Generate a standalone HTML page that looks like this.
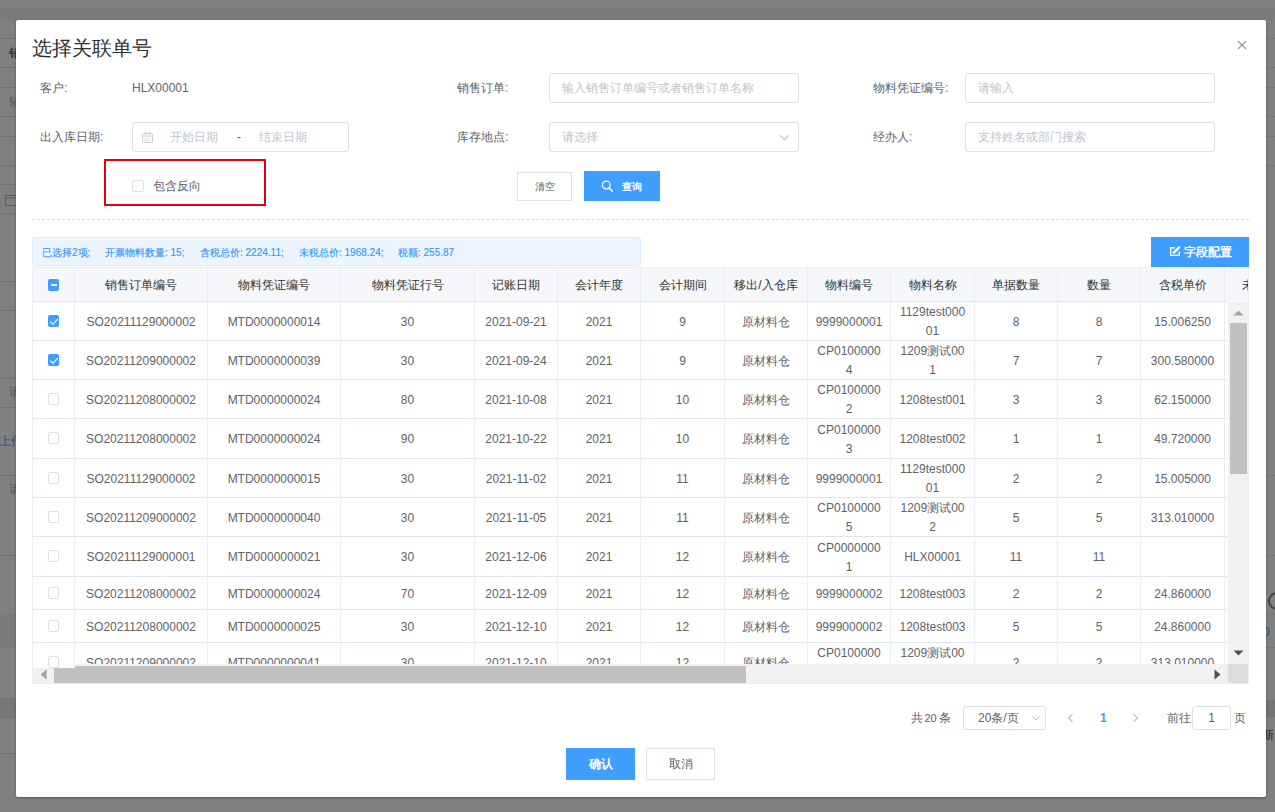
<!DOCTYPE html>
<html><head><meta charset="utf-8"><style>
html,body{margin:0;padding:0;width:1275px;height:812px;overflow:hidden;position:relative;font-family:"Liberation Sans", sans-serif;}
.t{position:absolute;white-space:nowrap;line-height:20px;height:20px}
</style></head><body>
<div style="position:absolute;left:0px;top:0px;width:1275px;height:812px;background:#808080"></div>
<div style="position:absolute;left:0px;top:9px;width:1275px;height:12px;background:#7a7b7b"></div>
<div style="position:absolute;left:0px;top:38px;width:16px;height:1px;background:#737476"></div>
<div style="position:absolute;left:0px;top:67px;width:16px;height:1px;background:#737476"></div>
<div style="position:absolute;left:0px;top:87px;width:16px;height:1px;background:#737476"></div>
<div style="position:absolute;left:0px;top:116px;width:16px;height:1px;background:#737476"></div>
<div style="position:absolute;left:0px;top:136px;width:16px;height:1px;background:#737476"></div>
<div style="position:absolute;left:0px;top:165px;width:16px;height:1px;background:#737476"></div>
<div style="position:absolute;left:0px;top:184px;width:16px;height:1px;background:#737476"></div>
<div style="position:absolute;left:0px;top:213px;width:16px;height:1px;background:#737476"></div>
<div style="position:absolute;left:0px;top:281px;width:16px;height:1px;background:#737476"></div>
<div style="position:absolute;left:0px;top:310px;width:16px;height:1px;background:#737476"></div>
<div style="position:absolute;left:0px;top:378px;width:16px;height:1px;background:#737476"></div>
<div style="position:absolute;left:0px;top:407px;width:16px;height:1px;background:#737476"></div>
<div style="position:absolute;left:0px;top:475px;width:16px;height:1px;background:#737476"></div>
<div style="position:absolute;left:0px;top:555px;width:16px;height:1px;background:#737476"></div>
<div style="position:absolute;left:0px;top:753px;width:16px;height:1px;background:#737476"></div>
<div style="position:absolute;left:1266px;top:38px;width:9px;height:1px;background:#737476"></div>
<div style="position:absolute;left:1266px;top:67px;width:9px;height:1px;background:#737476"></div>
<div style="position:absolute;left:1266px;top:87px;width:9px;height:1px;background:#737476"></div>
<div style="position:absolute;left:1266px;top:116px;width:9px;height:1px;background:#737476"></div>
<div style="position:absolute;left:1266px;top:136px;width:9px;height:1px;background:#737476"></div>
<div style="position:absolute;left:1266px;top:165px;width:9px;height:1px;background:#737476"></div>
<div style="position:absolute;left:1266px;top:475px;width:9px;height:1px;background:#737476"></div>
<div style="position:absolute;left:1266px;top:555px;width:9px;height:1px;background:#737476"></div>
<div style="position:absolute;left:1266px;top:614px;width:9px;height:1px;background:#737476"></div>
<div style="position:absolute;left:1266px;top:647px;width:9px;height:1px;background:#737476"></div>
<div style="position:absolute;left:0px;top:614px;width:16px;height:33px;background:#7a7b7c"></div>
<div style="position:absolute;left:0px;top:698px;width:16px;height:21px;background:#777777"></div>
<div style="position:absolute;left:1266px;top:700px;width:9px;height:17px;background:#747474"></div>
<div class="t" style="left:9px;top:43px;font-size:12px;color:#1a1a1a;font-weight:normal;">销</div>
<div class="t" style="left:9px;top:92px;font-size:12px;color:#555;font-weight:normal;">辅</div>
<svg style="position:absolute;left:5px;top:194px" width="12" height="12" viewBox="0 0 12 12"><rect x="0.5" y="1.5" width="11" height="10" fill="none" stroke="#5a5d66"/><line x1="0.5" y1="4" x2="11.5" y2="4" stroke="#5a5d66"/></svg>
<div class="t" style="left:9px;top:382px;font-size:12px;color:#555;font-weight:normal;">请</div>
<div class="t" style="left:-1px;top:431px;font-size:12px;color:#20508a;font-weight:normal;">上传</div>
<div class="t" style="left:9px;top:479px;font-size:12px;color:#555;font-weight:normal;">请</div>
<div style="position:absolute;left:1268px;top:592px;width:14px;height:14px;border:2px solid #444;border-radius:50%"></div>
<div class="t" style="left:1263px;top:622px;font-size:12px;color:#20508a;font-weight:normal;">0</div>
<div class="t" style="left:1262px;top:725px;font-size:12px;color:#222;font-weight:normal;">新</div>
<div style="position:absolute;left:16px;top:20px;width:1250px;height:777px;background:#fff;border-radius:2px;box-shadow:0 1px 3px rgba(0,0,0,.3)"></div>
<div class="t" style="left:32px;top:38px;font-size:20px;color:#303133;font-weight:300;">选择关联单号</div>
<svg style="position:absolute;left:1237px;top:40px" width="10" height="10" viewBox="0 0 10 10"><path d="M1 1L9 9M9 1L1 9" stroke="#909399" stroke-width="1.1"/></svg>
<div class="t" style="left:40px;top:78px;font-size:12px;color:#606266;font-weight:normal;">客户:</div>
<div class="t" style="left:457px;top:78px;font-size:12px;color:#606266;font-weight:normal;">销售订单:</div>
<div class="t" style="left:873px;top:78px;font-size:12px;color:#606266;font-weight:normal;">物料凭证编号:</div>
<div class="t" style="left:40px;top:127px;font-size:12px;color:#606266;font-weight:normal;">出入库日期:</div>
<div class="t" style="left:457px;top:127px;font-size:12px;color:#606266;font-weight:normal;">库存地点:</div>
<div class="t" style="left:873px;top:127px;font-size:12px;color:#606266;font-weight:normal;">经办人:</div>
<div class="t" style="left:132px;top:78px;font-size:12px;color:#606266;font-weight:normal;">HLX00001</div>
<div style="position:absolute;left:549px;top:73px;width:250px;height:30px;box-sizing:border-box;border:1px solid #dcdfe6;border-radius:3px;background:#fff"></div>
<div class="t" style="left:562px;top:78.0px;font-size:12px;color:#c0c4cc;font-weight:normal;">输入销售订单编号或者销售订单名称</div>
<div style="position:absolute;left:965px;top:73px;width:250px;height:30px;box-sizing:border-box;border:1px solid #dcdfe6;border-radius:3px;background:#fff"></div>
<div class="t" style="left:978px;top:78.0px;font-size:12px;color:#c0c4cc;font-weight:normal;">请输入</div>
<div style="position:absolute;left:132px;top:122px;width:217px;height:30px;box-sizing:border-box;border:1px solid #dcdfe6;border-radius:3px;background:#fff"></div>
<div class="t" style="left:170px;top:127px;font-size:12px;color:#c0c4cc;font-weight:normal;">开始日期</div>
<div class="t" style="left:237px;top:127px;font-size:12px;color:#606266;font-weight:normal;">-</div>
<div class="t" style="left:259px;top:127px;font-size:12px;color:#c0c4cc;font-weight:normal;">结束日期</div>
<svg style="position:absolute;left:141px;top:131px" width="13" height="13" viewBox="0 0 13 13"><rect x="1.5" y="2.5" width="10" height="9" rx="1" fill="none" stroke="#c8ccd4"/><line x1="1.5" y1="5" x2="11.5" y2="5" stroke="#c8ccd4"/><line x1="4.5" y1="1" x2="4.5" y2="3.5" stroke="#c8ccd4"/><line x1="8.5" y1="1" x2="8.5" y2="3.5" stroke="#c8ccd4"/><path d="M3.5 7.5h1.2M5.9 7.5h1.2M8.3 7.5h1.2M3.5 9.5h1.2M5.9 9.5h1.2M8.3 9.5h1.2" stroke="#c8ccd4"/></svg>
<div style="position:absolute;left:549px;top:122px;width:250px;height:30px;box-sizing:border-box;border:1px solid #dcdfe6;border-radius:3px;background:#fff"></div>
<div class="t" style="left:562px;top:127.0px;font-size:12px;color:#c0c4cc;font-weight:normal;">请选择</div>
<svg style="position:absolute;left:779px;top:133.7px" width="11" height="8" viewBox="0 0 11 8"><path d="M1 1.2L5.5 5.7L10 1.2" fill="none" stroke="#c6cad2" stroke-width="1.4"/></svg>
<div style="position:absolute;left:965px;top:122px;width:250px;height:30px;box-sizing:border-box;border:1px solid #dcdfe6;border-radius:3px;background:#fff"></div>
<div class="t" style="left:978px;top:127.0px;font-size:12px;color:#c0c4cc;font-weight:normal;">支持姓名或部门搜索</div>
<div style="position:absolute;left:104px;top:159px;width:162px;height:47px;box-sizing:border-box;border:2px solid #e6000e"></div>
<div style="position:absolute;left:132px;top:180px;width:12px;height:12px;box-sizing:border-box;border:1px solid #dcdfe6;border-radius:2px;background:#fff"></div>
<div class="t" style="left:153px;top:176px;font-size:12px;color:#606266;font-weight:normal;">包含反向</div>
<div style="position:absolute;left:517px;top:172px;width:55px;height:29px;box-sizing:border-box;border:1px solid #dcdfe6;background:#fff"></div>
<div class="t" style="left:344.5px;width:400px;text-align:center;top:176.5px;font-size:10px;color:#606266;font-weight:normal;">清空</div>
<div style="position:absolute;left:584px;top:171px;width:76px;height:30px;background:#409eff"></div>
<svg style="position:absolute;left:601px;top:180px" width="12" height="12" viewBox="0 0 12 12"><circle cx="5.3" cy="5" r="3.9" fill="none" stroke="#fff" stroke-width="1.2"/><path d="M8 7.8L11.4 11.2" stroke="#fff" stroke-width="1.5" stroke-linecap="round"/></svg>
<div class="t" style="left:622px;top:176.5px;font-size:10px;color:#fff;font-weight:bold;">查询</div>
<div style="position:absolute;left:32px;top:219px;width:1217px;height:0;border-top:1px dashed #d3dbde"></div>
<div style="position:absolute;left:32px;top:237px;width:609px;height:29px;box-sizing:border-box;border:1px solid #d9ecff;border-radius:3px;background:#ecf5ff"></div>
<div class="t" style="left:42px;top:243px;font-size:10px;color:#3797fa;font-weight:normal;-webkit-text-stroke:0.15px #3797fa">已选择2项;</div>
<div class="t" style="left:105px;top:243px;font-size:10px;color:#3797fa;font-weight:normal;-webkit-text-stroke:0.15px #3797fa">开票物料数量: 15;</div>
<div class="t" style="left:200px;top:243px;font-size:10px;color:#3797fa;font-weight:normal;-webkit-text-stroke:0.15px #3797fa">含税总价: 2224.11;</div>
<div class="t" style="left:299px;top:243px;font-size:10px;color:#3797fa;font-weight:normal;-webkit-text-stroke:0.15px #3797fa">未税总价: 1968.24;</div>
<div class="t" style="left:398px;top:243px;font-size:10px;color:#3797fa;font-weight:normal;-webkit-text-stroke:0.15px #3797fa">税额: 255.87</div>
<div style="position:absolute;left:1151px;top:237px;width:98px;height:30px;background:#409eff"></div>
<svg style="position:absolute;left:1169px;top:246px" width="12" height="11" viewBox="0 0 12 11"><path d="M6 1.7H1.7V9.4H10.3V5.4" fill="none" stroke="#fff" stroke-width="1.4"/><path d="M4.8 6.6L10 1.4" stroke="#fff" stroke-width="2.3" stroke-linecap="round"/></svg>
<div class="t" style="left:1184px;top:242px;font-size:12px;color:#fff;font-weight:bold;">字段配置</div>
<div style="position:absolute;left:32px;top:267px;width:1217px;height:417px;overflow:hidden">
<div style="position:absolute;left:0px;top:0px;width:1217px;height:34px;background:#f5f7fa"></div>
<div style="position:absolute;left:0px;top:0px;width:1217px;height:1px;background:#ebeef5"></div>
<div style="position:absolute;left:0px;top:34px;width:1196px;height:1px;background:#dfe6ec"></div>
<div style="position:absolute;left:42px;top:0px;width:1px;height:34px;background:#ebeef5"></div>
<div style="position:absolute;left:175px;top:0px;width:1px;height:34px;background:#ebeef5"></div>
<div style="position:absolute;left:308px;top:0px;width:1px;height:34px;background:#ebeef5"></div>
<div style="position:absolute;left:442px;top:0px;width:1px;height:34px;background:#ebeef5"></div>
<div style="position:absolute;left:525px;top:0px;width:1px;height:34px;background:#ebeef5"></div>
<div style="position:absolute;left:608px;top:0px;width:1px;height:34px;background:#ebeef5"></div>
<div style="position:absolute;left:692px;top:0px;width:1px;height:34px;background:#ebeef5"></div>
<div style="position:absolute;left:775px;top:0px;width:1px;height:34px;background:#ebeef5"></div>
<div style="position:absolute;left:858px;top:0px;width:1px;height:34px;background:#ebeef5"></div>
<div style="position:absolute;left:942px;top:0px;width:1px;height:34px;background:#ebeef5"></div>
<div style="position:absolute;left:1025px;top:0px;width:1px;height:34px;background:#ebeef5"></div>
<div style="position:absolute;left:1108px;top:0px;width:1px;height:34px;background:#ebeef5"></div>
<div style="position:absolute;left:1192px;top:0px;width:1px;height:34px;background:#ebeef5"></div>
<div class="t" style="left:9.0px;width:200px;text-align:center;top:-42px;height:120px;display:flex;align-items:center;justify-content:center;line-height:19px;font-size:12px;color:#303133;font-weight:normal"><span>销售订单编号</span></div>
<div class="t" style="left:142.0px;width:200px;text-align:center;top:-42px;height:120px;display:flex;align-items:center;justify-content:center;line-height:19px;font-size:12px;color:#303133;font-weight:normal"><span>物料凭证编号</span></div>
<div class="t" style="left:275.5px;width:200px;text-align:center;top:-42px;height:120px;display:flex;align-items:center;justify-content:center;line-height:19px;font-size:12px;color:#303133;font-weight:normal"><span>物料凭证行号</span></div>
<div class="t" style="left:384.0px;width:200px;text-align:center;top:-42px;height:120px;display:flex;align-items:center;justify-content:center;line-height:19px;font-size:12px;color:#303133;font-weight:normal"><span>记账日期</span></div>
<div class="t" style="left:467.0px;width:200px;text-align:center;top:-42px;height:120px;display:flex;align-items:center;justify-content:center;line-height:19px;font-size:12px;color:#303133;font-weight:normal"><span>会计年度</span></div>
<div class="t" style="left:550.5px;width:200px;text-align:center;top:-42px;height:120px;display:flex;align-items:center;justify-content:center;line-height:19px;font-size:12px;color:#303133;font-weight:normal"><span>会计期间</span></div>
<div class="t" style="left:634.0px;width:200px;text-align:center;top:-42px;height:120px;display:flex;align-items:center;justify-content:center;line-height:19px;font-size:12px;color:#303133;font-weight:normal"><span>移出/入仓库</span></div>
<div class="t" style="left:717.0px;width:200px;text-align:center;top:-42px;height:120px;display:flex;align-items:center;justify-content:center;line-height:19px;font-size:12px;color:#303133;font-weight:normal"><span>物料编号</span></div>
<div class="t" style="left:800.5px;width:200px;text-align:center;top:-42px;height:120px;display:flex;align-items:center;justify-content:center;line-height:19px;font-size:12px;color:#303133;font-weight:normal"><span>物料名称</span></div>
<div class="t" style="left:884.0px;width:200px;text-align:center;top:-42px;height:120px;display:flex;align-items:center;justify-content:center;line-height:19px;font-size:12px;color:#303133;font-weight:normal"><span>单据数量</span></div>
<div class="t" style="left:967.0px;width:200px;text-align:center;top:-42px;height:120px;display:flex;align-items:center;justify-content:center;line-height:19px;font-size:12px;color:#303133;font-weight:normal"><span>数量</span></div>
<div class="t" style="left:1050.5px;width:200px;text-align:center;top:-42px;height:120px;display:flex;align-items:center;justify-content:center;line-height:19px;font-size:12px;color:#303133;font-weight:normal"><span>含税单价</span></div>
<div class="t" style="left:1134.0px;width:200px;text-align:center;top:-42px;height:120px;display:flex;align-items:center;justify-content:center;line-height:19px;font-size:12px;color:#303133;font-weight:normal"><span>未税单价</span></div>
</div>
<div style="position:absolute;left:32px;top:302px;width:1196px;height:362px;overflow:hidden">
<div style="position:absolute;left:0px;top:38px;width:1196px;height:1px;background:#dfe6ec"></div>
<div class="t" style="left:9.0px;width:200px;top:-40.0px;height:120px;display:flex;align-items:center;justify-content:center;text-align:center;line-height:19px;font-size:12px;color:#606266"><span>SO20211129000002</span></div>
<div class="t" style="left:142.0px;width:200px;top:-40.0px;height:120px;display:flex;align-items:center;justify-content:center;text-align:center;line-height:19px;font-size:12px;color:#606266"><span>MTD0000000014</span></div>
<div class="t" style="left:275.5px;width:200px;top:-40.0px;height:120px;display:flex;align-items:center;justify-content:center;text-align:center;line-height:19px;font-size:12px;color:#606266"><span>30</span></div>
<div class="t" style="left:384.0px;width:200px;top:-40.0px;height:120px;display:flex;align-items:center;justify-content:center;text-align:center;line-height:19px;font-size:12px;color:#606266"><span>2021-09-21</span></div>
<div class="t" style="left:467.0px;width:200px;top:-40.0px;height:120px;display:flex;align-items:center;justify-content:center;text-align:center;line-height:19px;font-size:12px;color:#606266"><span>2021</span></div>
<div class="t" style="left:550.5px;width:200px;top:-40.0px;height:120px;display:flex;align-items:center;justify-content:center;text-align:center;line-height:19px;font-size:12px;color:#606266"><span>9</span></div>
<div class="t" style="left:634.0px;width:200px;top:-40.0px;height:120px;display:flex;align-items:center;justify-content:center;text-align:center;line-height:19px;font-size:12px;color:#606266"><span>原材料仓</span></div>
<div class="t" style="left:717.0px;width:200px;top:-40.0px;height:120px;display:flex;align-items:center;justify-content:center;text-align:center;line-height:19px;font-size:12px;color:#606266"><span>9999000001</span></div>
<div class="t" style="left:800.5px;width:200px;top:-40.0px;height:120px;display:flex;align-items:center;justify-content:center;text-align:center;line-height:19px;font-size:12px;color:#606266"><span>1129test000<br>01</span></div>
<div class="t" style="left:884.0px;width:200px;top:-40.0px;height:120px;display:flex;align-items:center;justify-content:center;text-align:center;line-height:19px;font-size:12px;color:#606266"><span>8</span></div>
<div class="t" style="left:967.0px;width:200px;top:-40.0px;height:120px;display:flex;align-items:center;justify-content:center;text-align:center;line-height:19px;font-size:12px;color:#606266"><span>8</span></div>
<div class="t" style="left:1050.5px;width:200px;top:-40.0px;height:120px;display:flex;align-items:center;justify-content:center;text-align:center;line-height:19px;font-size:12px;color:#606266"><span>15.006250</span></div>
<div style="position:absolute;left:0px;top:77px;width:1196px;height:1px;background:#dfe6ec"></div>
<div class="t" style="left:9.0px;width:200px;top:-1.0px;height:120px;display:flex;align-items:center;justify-content:center;text-align:center;line-height:19px;font-size:12px;color:#606266"><span>SO20211209000002</span></div>
<div class="t" style="left:142.0px;width:200px;top:-1.0px;height:120px;display:flex;align-items:center;justify-content:center;text-align:center;line-height:19px;font-size:12px;color:#606266"><span>MTD0000000039</span></div>
<div class="t" style="left:275.5px;width:200px;top:-1.0px;height:120px;display:flex;align-items:center;justify-content:center;text-align:center;line-height:19px;font-size:12px;color:#606266"><span>30</span></div>
<div class="t" style="left:384.0px;width:200px;top:-1.0px;height:120px;display:flex;align-items:center;justify-content:center;text-align:center;line-height:19px;font-size:12px;color:#606266"><span>2021-09-24</span></div>
<div class="t" style="left:467.0px;width:200px;top:-1.0px;height:120px;display:flex;align-items:center;justify-content:center;text-align:center;line-height:19px;font-size:12px;color:#606266"><span>2021</span></div>
<div class="t" style="left:550.5px;width:200px;top:-1.0px;height:120px;display:flex;align-items:center;justify-content:center;text-align:center;line-height:19px;font-size:12px;color:#606266"><span>9</span></div>
<div class="t" style="left:634.0px;width:200px;top:-1.0px;height:120px;display:flex;align-items:center;justify-content:center;text-align:center;line-height:19px;font-size:12px;color:#606266"><span>原材料仓</span></div>
<div class="t" style="left:717.0px;width:200px;top:-1.0px;height:120px;display:flex;align-items:center;justify-content:center;text-align:center;line-height:19px;font-size:12px;color:#606266"><span>CP0100000<br>4</span></div>
<div class="t" style="left:800.5px;width:200px;top:-1.0px;height:120px;display:flex;align-items:center;justify-content:center;text-align:center;line-height:19px;font-size:12px;color:#606266"><span>1209测试00<br>1</span></div>
<div class="t" style="left:884.0px;width:200px;top:-1.0px;height:120px;display:flex;align-items:center;justify-content:center;text-align:center;line-height:19px;font-size:12px;color:#606266"><span>7</span></div>
<div class="t" style="left:967.0px;width:200px;top:-1.0px;height:120px;display:flex;align-items:center;justify-content:center;text-align:center;line-height:19px;font-size:12px;color:#606266"><span>7</span></div>
<div class="t" style="left:1050.5px;width:200px;top:-1.0px;height:120px;display:flex;align-items:center;justify-content:center;text-align:center;line-height:19px;font-size:12px;color:#606266"><span>300.580000</span></div>
<div style="position:absolute;left:0px;top:116px;width:1196px;height:1px;background:#dfe6ec"></div>
<div class="t" style="left:9.0px;width:200px;top:38.0px;height:120px;display:flex;align-items:center;justify-content:center;text-align:center;line-height:19px;font-size:12px;color:#606266"><span>SO20211208000002</span></div>
<div class="t" style="left:142.0px;width:200px;top:38.0px;height:120px;display:flex;align-items:center;justify-content:center;text-align:center;line-height:19px;font-size:12px;color:#606266"><span>MTD0000000024</span></div>
<div class="t" style="left:275.5px;width:200px;top:38.0px;height:120px;display:flex;align-items:center;justify-content:center;text-align:center;line-height:19px;font-size:12px;color:#606266"><span>80</span></div>
<div class="t" style="left:384.0px;width:200px;top:38.0px;height:120px;display:flex;align-items:center;justify-content:center;text-align:center;line-height:19px;font-size:12px;color:#606266"><span>2021-10-08</span></div>
<div class="t" style="left:467.0px;width:200px;top:38.0px;height:120px;display:flex;align-items:center;justify-content:center;text-align:center;line-height:19px;font-size:12px;color:#606266"><span>2021</span></div>
<div class="t" style="left:550.5px;width:200px;top:38.0px;height:120px;display:flex;align-items:center;justify-content:center;text-align:center;line-height:19px;font-size:12px;color:#606266"><span>10</span></div>
<div class="t" style="left:634.0px;width:200px;top:38.0px;height:120px;display:flex;align-items:center;justify-content:center;text-align:center;line-height:19px;font-size:12px;color:#606266"><span>原材料仓</span></div>
<div class="t" style="left:717.0px;width:200px;top:38.0px;height:120px;display:flex;align-items:center;justify-content:center;text-align:center;line-height:19px;font-size:12px;color:#606266"><span>CP0100000<br>2</span></div>
<div class="t" style="left:800.5px;width:200px;top:38.0px;height:120px;display:flex;align-items:center;justify-content:center;text-align:center;line-height:19px;font-size:12px;color:#606266"><span>1208test001</span></div>
<div class="t" style="left:884.0px;width:200px;top:38.0px;height:120px;display:flex;align-items:center;justify-content:center;text-align:center;line-height:19px;font-size:12px;color:#606266"><span>3</span></div>
<div class="t" style="left:967.0px;width:200px;top:38.0px;height:120px;display:flex;align-items:center;justify-content:center;text-align:center;line-height:19px;font-size:12px;color:#606266"><span>3</span></div>
<div class="t" style="left:1050.5px;width:200px;top:38.0px;height:120px;display:flex;align-items:center;justify-content:center;text-align:center;line-height:19px;font-size:12px;color:#606266"><span>62.150000</span></div>
<div style="position:absolute;left:0px;top:156px;width:1196px;height:1px;background:#dfe6ec"></div>
<div class="t" style="left:9.0px;width:200px;top:77.5px;height:120px;display:flex;align-items:center;justify-content:center;text-align:center;line-height:19px;font-size:12px;color:#606266"><span>SO20211208000002</span></div>
<div class="t" style="left:142.0px;width:200px;top:77.5px;height:120px;display:flex;align-items:center;justify-content:center;text-align:center;line-height:19px;font-size:12px;color:#606266"><span>MTD0000000024</span></div>
<div class="t" style="left:275.5px;width:200px;top:77.5px;height:120px;display:flex;align-items:center;justify-content:center;text-align:center;line-height:19px;font-size:12px;color:#606266"><span>90</span></div>
<div class="t" style="left:384.0px;width:200px;top:77.5px;height:120px;display:flex;align-items:center;justify-content:center;text-align:center;line-height:19px;font-size:12px;color:#606266"><span>2021-10-22</span></div>
<div class="t" style="left:467.0px;width:200px;top:77.5px;height:120px;display:flex;align-items:center;justify-content:center;text-align:center;line-height:19px;font-size:12px;color:#606266"><span>2021</span></div>
<div class="t" style="left:550.5px;width:200px;top:77.5px;height:120px;display:flex;align-items:center;justify-content:center;text-align:center;line-height:19px;font-size:12px;color:#606266"><span>10</span></div>
<div class="t" style="left:634.0px;width:200px;top:77.5px;height:120px;display:flex;align-items:center;justify-content:center;text-align:center;line-height:19px;font-size:12px;color:#606266"><span>原材料仓</span></div>
<div class="t" style="left:717.0px;width:200px;top:77.5px;height:120px;display:flex;align-items:center;justify-content:center;text-align:center;line-height:19px;font-size:12px;color:#606266"><span>CP0100000<br>3</span></div>
<div class="t" style="left:800.5px;width:200px;top:77.5px;height:120px;display:flex;align-items:center;justify-content:center;text-align:center;line-height:19px;font-size:12px;color:#606266"><span>1208test002</span></div>
<div class="t" style="left:884.0px;width:200px;top:77.5px;height:120px;display:flex;align-items:center;justify-content:center;text-align:center;line-height:19px;font-size:12px;color:#606266"><span>1</span></div>
<div class="t" style="left:967.0px;width:200px;top:77.5px;height:120px;display:flex;align-items:center;justify-content:center;text-align:center;line-height:19px;font-size:12px;color:#606266"><span>1</span></div>
<div class="t" style="left:1050.5px;width:200px;top:77.5px;height:120px;display:flex;align-items:center;justify-content:center;text-align:center;line-height:19px;font-size:12px;color:#606266"><span>49.720000</span></div>
<div style="position:absolute;left:0px;top:195px;width:1196px;height:1px;background:#dfe6ec"></div>
<div class="t" style="left:9.0px;width:200px;top:117.0px;height:120px;display:flex;align-items:center;justify-content:center;text-align:center;line-height:19px;font-size:12px;color:#606266"><span>SO20211129000002</span></div>
<div class="t" style="left:142.0px;width:200px;top:117.0px;height:120px;display:flex;align-items:center;justify-content:center;text-align:center;line-height:19px;font-size:12px;color:#606266"><span>MTD0000000015</span></div>
<div class="t" style="left:275.5px;width:200px;top:117.0px;height:120px;display:flex;align-items:center;justify-content:center;text-align:center;line-height:19px;font-size:12px;color:#606266"><span>30</span></div>
<div class="t" style="left:384.0px;width:200px;top:117.0px;height:120px;display:flex;align-items:center;justify-content:center;text-align:center;line-height:19px;font-size:12px;color:#606266"><span>2021-11-02</span></div>
<div class="t" style="left:467.0px;width:200px;top:117.0px;height:120px;display:flex;align-items:center;justify-content:center;text-align:center;line-height:19px;font-size:12px;color:#606266"><span>2021</span></div>
<div class="t" style="left:550.5px;width:200px;top:117.0px;height:120px;display:flex;align-items:center;justify-content:center;text-align:center;line-height:19px;font-size:12px;color:#606266"><span>11</span></div>
<div class="t" style="left:634.0px;width:200px;top:117.0px;height:120px;display:flex;align-items:center;justify-content:center;text-align:center;line-height:19px;font-size:12px;color:#606266"><span>原材料仓</span></div>
<div class="t" style="left:717.0px;width:200px;top:117.0px;height:120px;display:flex;align-items:center;justify-content:center;text-align:center;line-height:19px;font-size:12px;color:#606266"><span>9999000001</span></div>
<div class="t" style="left:800.5px;width:200px;top:117.0px;height:120px;display:flex;align-items:center;justify-content:center;text-align:center;line-height:19px;font-size:12px;color:#606266"><span>1129test000<br>01</span></div>
<div class="t" style="left:884.0px;width:200px;top:117.0px;height:120px;display:flex;align-items:center;justify-content:center;text-align:center;line-height:19px;font-size:12px;color:#606266"><span>2</span></div>
<div class="t" style="left:967.0px;width:200px;top:117.0px;height:120px;display:flex;align-items:center;justify-content:center;text-align:center;line-height:19px;font-size:12px;color:#606266"><span>2</span></div>
<div class="t" style="left:1050.5px;width:200px;top:117.0px;height:120px;display:flex;align-items:center;justify-content:center;text-align:center;line-height:19px;font-size:12px;color:#606266"><span>15.005000</span></div>
<div style="position:absolute;left:0px;top:234px;width:1196px;height:1px;background:#dfe6ec"></div>
<div class="t" style="left:9.0px;width:200px;top:156.0px;height:120px;display:flex;align-items:center;justify-content:center;text-align:center;line-height:19px;font-size:12px;color:#606266"><span>SO20211209000002</span></div>
<div class="t" style="left:142.0px;width:200px;top:156.0px;height:120px;display:flex;align-items:center;justify-content:center;text-align:center;line-height:19px;font-size:12px;color:#606266"><span>MTD0000000040</span></div>
<div class="t" style="left:275.5px;width:200px;top:156.0px;height:120px;display:flex;align-items:center;justify-content:center;text-align:center;line-height:19px;font-size:12px;color:#606266"><span>30</span></div>
<div class="t" style="left:384.0px;width:200px;top:156.0px;height:120px;display:flex;align-items:center;justify-content:center;text-align:center;line-height:19px;font-size:12px;color:#606266"><span>2021-11-05</span></div>
<div class="t" style="left:467.0px;width:200px;top:156.0px;height:120px;display:flex;align-items:center;justify-content:center;text-align:center;line-height:19px;font-size:12px;color:#606266"><span>2021</span></div>
<div class="t" style="left:550.5px;width:200px;top:156.0px;height:120px;display:flex;align-items:center;justify-content:center;text-align:center;line-height:19px;font-size:12px;color:#606266"><span>11</span></div>
<div class="t" style="left:634.0px;width:200px;top:156.0px;height:120px;display:flex;align-items:center;justify-content:center;text-align:center;line-height:19px;font-size:12px;color:#606266"><span>原材料仓</span></div>
<div class="t" style="left:717.0px;width:200px;top:156.0px;height:120px;display:flex;align-items:center;justify-content:center;text-align:center;line-height:19px;font-size:12px;color:#606266"><span>CP0100000<br>5</span></div>
<div class="t" style="left:800.5px;width:200px;top:156.0px;height:120px;display:flex;align-items:center;justify-content:center;text-align:center;line-height:19px;font-size:12px;color:#606266"><span>1209测试00<br>2</span></div>
<div class="t" style="left:884.0px;width:200px;top:156.0px;height:120px;display:flex;align-items:center;justify-content:center;text-align:center;line-height:19px;font-size:12px;color:#606266"><span>5</span></div>
<div class="t" style="left:967.0px;width:200px;top:156.0px;height:120px;display:flex;align-items:center;justify-content:center;text-align:center;line-height:19px;font-size:12px;color:#606266"><span>5</span></div>
<div class="t" style="left:1050.5px;width:200px;top:156.0px;height:120px;display:flex;align-items:center;justify-content:center;text-align:center;line-height:19px;font-size:12px;color:#606266"><span>313.010000</span></div>
<div style="position:absolute;left:0px;top:274px;width:1196px;height:1px;background:#dfe6ec"></div>
<div class="t" style="left:9.0px;width:200px;top:195.5px;height:120px;display:flex;align-items:center;justify-content:center;text-align:center;line-height:19px;font-size:12px;color:#606266"><span>SO20211129000001</span></div>
<div class="t" style="left:142.0px;width:200px;top:195.5px;height:120px;display:flex;align-items:center;justify-content:center;text-align:center;line-height:19px;font-size:12px;color:#606266"><span>MTD0000000021</span></div>
<div class="t" style="left:275.5px;width:200px;top:195.5px;height:120px;display:flex;align-items:center;justify-content:center;text-align:center;line-height:19px;font-size:12px;color:#606266"><span>30</span></div>
<div class="t" style="left:384.0px;width:200px;top:195.5px;height:120px;display:flex;align-items:center;justify-content:center;text-align:center;line-height:19px;font-size:12px;color:#606266"><span>2021-12-06</span></div>
<div class="t" style="left:467.0px;width:200px;top:195.5px;height:120px;display:flex;align-items:center;justify-content:center;text-align:center;line-height:19px;font-size:12px;color:#606266"><span>2021</span></div>
<div class="t" style="left:550.5px;width:200px;top:195.5px;height:120px;display:flex;align-items:center;justify-content:center;text-align:center;line-height:19px;font-size:12px;color:#606266"><span>12</span></div>
<div class="t" style="left:634.0px;width:200px;top:195.5px;height:120px;display:flex;align-items:center;justify-content:center;text-align:center;line-height:19px;font-size:12px;color:#606266"><span>原材料仓</span></div>
<div class="t" style="left:717.0px;width:200px;top:195.5px;height:120px;display:flex;align-items:center;justify-content:center;text-align:center;line-height:19px;font-size:12px;color:#606266"><span>CP0000000<br>1</span></div>
<div class="t" style="left:800.5px;width:200px;top:195.5px;height:120px;display:flex;align-items:center;justify-content:center;text-align:center;line-height:19px;font-size:12px;color:#606266"><span>HLX00001</span></div>
<div class="t" style="left:884.0px;width:200px;top:195.5px;height:120px;display:flex;align-items:center;justify-content:center;text-align:center;line-height:19px;font-size:12px;color:#606266"><span>11</span></div>
<div class="t" style="left:967.0px;width:200px;top:195.5px;height:120px;display:flex;align-items:center;justify-content:center;text-align:center;line-height:19px;font-size:12px;color:#606266"><span>11</span></div>
<div style="position:absolute;left:0px;top:307px;width:1196px;height:1px;background:#dfe6ec"></div>
<div class="t" style="left:9.0px;width:200px;top:232.0px;height:120px;display:flex;align-items:center;justify-content:center;text-align:center;line-height:19px;font-size:12px;color:#606266"><span>SO20211208000002</span></div>
<div class="t" style="left:142.0px;width:200px;top:232.0px;height:120px;display:flex;align-items:center;justify-content:center;text-align:center;line-height:19px;font-size:12px;color:#606266"><span>MTD0000000024</span></div>
<div class="t" style="left:275.5px;width:200px;top:232.0px;height:120px;display:flex;align-items:center;justify-content:center;text-align:center;line-height:19px;font-size:12px;color:#606266"><span>70</span></div>
<div class="t" style="left:384.0px;width:200px;top:232.0px;height:120px;display:flex;align-items:center;justify-content:center;text-align:center;line-height:19px;font-size:12px;color:#606266"><span>2021-12-09</span></div>
<div class="t" style="left:467.0px;width:200px;top:232.0px;height:120px;display:flex;align-items:center;justify-content:center;text-align:center;line-height:19px;font-size:12px;color:#606266"><span>2021</span></div>
<div class="t" style="left:550.5px;width:200px;top:232.0px;height:120px;display:flex;align-items:center;justify-content:center;text-align:center;line-height:19px;font-size:12px;color:#606266"><span>12</span></div>
<div class="t" style="left:634.0px;width:200px;top:232.0px;height:120px;display:flex;align-items:center;justify-content:center;text-align:center;line-height:19px;font-size:12px;color:#606266"><span>原材料仓</span></div>
<div class="t" style="left:717.0px;width:200px;top:232.0px;height:120px;display:flex;align-items:center;justify-content:center;text-align:center;line-height:19px;font-size:12px;color:#606266"><span>9999000002</span></div>
<div class="t" style="left:800.5px;width:200px;top:232.0px;height:120px;display:flex;align-items:center;justify-content:center;text-align:center;line-height:19px;font-size:12px;color:#606266"><span>1208test003</span></div>
<div class="t" style="left:884.0px;width:200px;top:232.0px;height:120px;display:flex;align-items:center;justify-content:center;text-align:center;line-height:19px;font-size:12px;color:#606266"><span>2</span></div>
<div class="t" style="left:967.0px;width:200px;top:232.0px;height:120px;display:flex;align-items:center;justify-content:center;text-align:center;line-height:19px;font-size:12px;color:#606266"><span>2</span></div>
<div class="t" style="left:1050.5px;width:200px;top:232.0px;height:120px;display:flex;align-items:center;justify-content:center;text-align:center;line-height:19px;font-size:12px;color:#606266"><span>24.860000</span></div>
<div style="position:absolute;left:0px;top:340px;width:1196px;height:1px;background:#dfe6ec"></div>
<div class="t" style="left:9.0px;width:200px;top:265.0px;height:120px;display:flex;align-items:center;justify-content:center;text-align:center;line-height:19px;font-size:12px;color:#606266"><span>SO20211208000002</span></div>
<div class="t" style="left:142.0px;width:200px;top:265.0px;height:120px;display:flex;align-items:center;justify-content:center;text-align:center;line-height:19px;font-size:12px;color:#606266"><span>MTD0000000025</span></div>
<div class="t" style="left:275.5px;width:200px;top:265.0px;height:120px;display:flex;align-items:center;justify-content:center;text-align:center;line-height:19px;font-size:12px;color:#606266"><span>30</span></div>
<div class="t" style="left:384.0px;width:200px;top:265.0px;height:120px;display:flex;align-items:center;justify-content:center;text-align:center;line-height:19px;font-size:12px;color:#606266"><span>2021-12-10</span></div>
<div class="t" style="left:467.0px;width:200px;top:265.0px;height:120px;display:flex;align-items:center;justify-content:center;text-align:center;line-height:19px;font-size:12px;color:#606266"><span>2021</span></div>
<div class="t" style="left:550.5px;width:200px;top:265.0px;height:120px;display:flex;align-items:center;justify-content:center;text-align:center;line-height:19px;font-size:12px;color:#606266"><span>12</span></div>
<div class="t" style="left:634.0px;width:200px;top:265.0px;height:120px;display:flex;align-items:center;justify-content:center;text-align:center;line-height:19px;font-size:12px;color:#606266"><span>原材料仓</span></div>
<div class="t" style="left:717.0px;width:200px;top:265.0px;height:120px;display:flex;align-items:center;justify-content:center;text-align:center;line-height:19px;font-size:12px;color:#606266"><span>9999000002</span></div>
<div class="t" style="left:800.5px;width:200px;top:265.0px;height:120px;display:flex;align-items:center;justify-content:center;text-align:center;line-height:19px;font-size:12px;color:#606266"><span>1208test003</span></div>
<div class="t" style="left:884.0px;width:200px;top:265.0px;height:120px;display:flex;align-items:center;justify-content:center;text-align:center;line-height:19px;font-size:12px;color:#606266"><span>5</span></div>
<div class="t" style="left:967.0px;width:200px;top:265.0px;height:120px;display:flex;align-items:center;justify-content:center;text-align:center;line-height:19px;font-size:12px;color:#606266"><span>5</span></div>
<div class="t" style="left:1050.5px;width:200px;top:265.0px;height:120px;display:flex;align-items:center;justify-content:center;text-align:center;line-height:19px;font-size:12px;color:#606266"><span>24.860000</span></div>
<div style="position:absolute;left:0px;top:379px;width:1196px;height:1px;background:#dfe6ec"></div>
<div class="t" style="left:9.0px;width:200px;top:301.0px;height:120px;display:flex;align-items:center;justify-content:center;text-align:center;line-height:19px;font-size:12px;color:#606266"><span>SO20211209000002</span></div>
<div class="t" style="left:142.0px;width:200px;top:301.0px;height:120px;display:flex;align-items:center;justify-content:center;text-align:center;line-height:19px;font-size:12px;color:#606266"><span>MTD0000000041</span></div>
<div class="t" style="left:275.5px;width:200px;top:301.0px;height:120px;display:flex;align-items:center;justify-content:center;text-align:center;line-height:19px;font-size:12px;color:#606266"><span>30</span></div>
<div class="t" style="left:384.0px;width:200px;top:301.0px;height:120px;display:flex;align-items:center;justify-content:center;text-align:center;line-height:19px;font-size:12px;color:#606266"><span>2021-12-10</span></div>
<div class="t" style="left:467.0px;width:200px;top:301.0px;height:120px;display:flex;align-items:center;justify-content:center;text-align:center;line-height:19px;font-size:12px;color:#606266"><span>2021</span></div>
<div class="t" style="left:550.5px;width:200px;top:301.0px;height:120px;display:flex;align-items:center;justify-content:center;text-align:center;line-height:19px;font-size:12px;color:#606266"><span>12</span></div>
<div class="t" style="left:634.0px;width:200px;top:301.0px;height:120px;display:flex;align-items:center;justify-content:center;text-align:center;line-height:19px;font-size:12px;color:#606266"><span>原材料仓</span></div>
<div class="t" style="left:717.0px;width:200px;top:301.0px;height:120px;display:flex;align-items:center;justify-content:center;text-align:center;line-height:19px;font-size:12px;color:#606266"><span>CP0100000<br>6</span></div>
<div class="t" style="left:800.5px;width:200px;top:301.0px;height:120px;display:flex;align-items:center;justify-content:center;text-align:center;line-height:19px;font-size:12px;color:#606266"><span>1209测试00<br>3</span></div>
<div class="t" style="left:884.0px;width:200px;top:301.0px;height:120px;display:flex;align-items:center;justify-content:center;text-align:center;line-height:19px;font-size:12px;color:#606266"><span>2</span></div>
<div class="t" style="left:967.0px;width:200px;top:301.0px;height:120px;display:flex;align-items:center;justify-content:center;text-align:center;line-height:19px;font-size:12px;color:#606266"><span>2</span></div>
<div class="t" style="left:1050.5px;width:200px;top:301.0px;height:120px;display:flex;align-items:center;justify-content:center;text-align:center;line-height:19px;font-size:12px;color:#606266"><span>313.010000</span></div>
<div style="position:absolute;left:42px;top:0px;width:1px;height:362px;background:#ebeef5"></div>
<div style="position:absolute;left:175px;top:0px;width:1px;height:362px;background:#ebeef5"></div>
<div style="position:absolute;left:308px;top:0px;width:1px;height:362px;background:#ebeef5"></div>
<div style="position:absolute;left:442px;top:0px;width:1px;height:362px;background:#ebeef5"></div>
<div style="position:absolute;left:525px;top:0px;width:1px;height:362px;background:#ebeef5"></div>
<div style="position:absolute;left:608px;top:0px;width:1px;height:362px;background:#ebeef5"></div>
<div style="position:absolute;left:692px;top:0px;width:1px;height:362px;background:#ebeef5"></div>
<div style="position:absolute;left:775px;top:0px;width:1px;height:362px;background:#ebeef5"></div>
<div style="position:absolute;left:858px;top:0px;width:1px;height:362px;background:#ebeef5"></div>
<div style="position:absolute;left:942px;top:0px;width:1px;height:362px;background:#ebeef5"></div>
<div style="position:absolute;left:1025px;top:0px;width:1px;height:362px;background:#ebeef5"></div>
<div style="position:absolute;left:1108px;top:0px;width:1px;height:362px;background:#ebeef5"></div>
<div style="position:absolute;left:1192px;top:0px;width:1px;height:362px;background:#ebeef5"></div>
</div>
<div style="position:absolute;left:48px;top:279px;width:11px;height:12px;border-radius:2px;background:#409eff"></div>
<div style="position:absolute;left:51px;top:284px;width:6px;height:2px;background:#fff"></div>
<div style="position:absolute;left:1228px;top:302px;width:21px;height:362px;background:#f1f1f1"></div>
<div style="position:absolute;left:1230px;top:323px;width:17px;height:151px;background:#c1c1c1"></div>
<svg style="position:absolute;left:1233px;top:310px" width="11" height="6" viewBox="0 0 11 6"><path d="M0.5 5.5L5.5 0.5L10.5 5.5Z" fill="#a3a3a3"/></svg>
<svg style="position:absolute;left:1233px;top:650px" width="11" height="6" viewBox="0 0 11 6"><path d="M0.5 0.5L5.5 5.5L10.5 0.5Z" fill="#505050"/></svg>
<div style="position:absolute;left:33px;top:664px;width:1195px;height:19px;background:#f1f1f1"></div>
<div style="position:absolute;left:54px;top:666px;width:692px;height:17px;background:#c1c1c1"></div>
<div style="position:absolute;left:1228px;top:664px;width:21px;height:19px;background:#dcdcdc"></div>
<svg style="position:absolute;left:40px;top:669px" width="7" height="11" viewBox="0 0 7 11"><path d="M6.5 0.5L0.5 5.5L6.5 10.5Z" fill="#a3a3a3"/></svg>
<svg style="position:absolute;left:1214px;top:669px" width="7" height="11" viewBox="0 0 7 11"><path d="M0.5 0.5L6.5 5.5L0.5 10.5Z" fill="#505050"/></svg>
<div style="position:absolute;left:32px;top:683px;width:1217px;height:1px;background:#ebeef5"></div>
<div style="position:absolute;left:32px;top:302px;width:43px;height:366px;overflow:hidden;background:#fff">
<div style="position:absolute;left:0;top:38px;width:43px;height:1px;background:#dfe6ec"></div>
<div style="position:absolute;left:16px;top:13px;width:11px;height:12px;border-radius:2px;background:#409eff"><svg width="11" height="12" viewBox="0 0 11 12" style="position:absolute;left:0;top:0"><path d="M2.2 6.6L5 9.2L9.8 4.2" fill="none" stroke="#fff" stroke-width="1.1"/></svg></div>
<div style="position:absolute;left:0;top:77px;width:43px;height:1px;background:#dfe6ec"></div>
<div style="position:absolute;left:16px;top:52px;width:11px;height:12px;border-radius:2px;background:#409eff"><svg width="11" height="12" viewBox="0 0 11 12" style="position:absolute;left:0;top:0"><path d="M2.2 6.6L5 9.2L9.8 4.2" fill="none" stroke="#fff" stroke-width="1.1"/></svg></div>
<div style="position:absolute;left:0;top:116px;width:43px;height:1px;background:#dfe6ec"></div>
<div style="position:absolute;left:16px;top:91px;width:11px;height:12px;box-sizing:border-box;border:1px solid #dcdfe6;border-radius:2px;background:#fff"></div>
<div style="position:absolute;left:0;top:156px;width:43px;height:1px;background:#dfe6ec"></div>
<div style="position:absolute;left:16px;top:130px;width:11px;height:12px;box-sizing:border-box;border:1px solid #dcdfe6;border-radius:2px;background:#fff"></div>
<div style="position:absolute;left:0;top:195px;width:43px;height:1px;background:#dfe6ec"></div>
<div style="position:absolute;left:16px;top:170px;width:11px;height:12px;box-sizing:border-box;border:1px solid #dcdfe6;border-radius:2px;background:#fff"></div>
<div style="position:absolute;left:0;top:234px;width:43px;height:1px;background:#dfe6ec"></div>
<div style="position:absolute;left:16px;top:209px;width:11px;height:12px;box-sizing:border-box;border:1px solid #dcdfe6;border-radius:2px;background:#fff"></div>
<div style="position:absolute;left:0;top:274px;width:43px;height:1px;background:#dfe6ec"></div>
<div style="position:absolute;left:16px;top:248px;width:11px;height:12px;box-sizing:border-box;border:1px solid #dcdfe6;border-radius:2px;background:#fff"></div>
<div style="position:absolute;left:0;top:307px;width:43px;height:1px;background:#dfe6ec"></div>
<div style="position:absolute;left:16px;top:285px;width:11px;height:12px;box-sizing:border-box;border:1px solid #dcdfe6;border-radius:2px;background:#fff"></div>
<div style="position:absolute;left:0;top:340px;width:43px;height:1px;background:#dfe6ec"></div>
<div style="position:absolute;left:16px;top:318px;width:11px;height:12px;box-sizing:border-box;border:1px solid #dcdfe6;border-radius:2px;background:#fff"></div>
<div style="position:absolute;left:0;top:379px;width:43px;height:1px;background:#dfe6ec"></div>
<div style="position:absolute;left:16px;top:354px;width:11px;height:12px;box-sizing:border-box;border:1px solid #dcdfe6;border-radius:2px;background:#fff"></div>
<div style="position:absolute;left:42px;top:0;width:1px;height:367px;background:#ebeef5"></div>
</div>
<div style="position:absolute;left:32px;top:267px;width:1px;height:417px;background:#ebeef5"></div>
<div style="position:absolute;left:1248px;top:267px;width:1px;height:417px;background:#ebeef5"></div>
<div class="t" style="left:911px;top:707.5px;font-size:12px;color:#606266;font-weight:normal;">共</div>
<div class="t" style="left:924.5px;top:707.5px;font-size:11px;color:#606266;font-weight:normal;">20</div>
<div class="t" style="left:939px;top:707.5px;font-size:12px;color:#606266;font-weight:normal;">条</div>
<div style="position:absolute;left:963px;top:706px;width:83px;height:24px;box-sizing:border-box;border:1px solid #dcdfe6;border-radius:3px;background:#fff"></div>
<div class="t" style="left:978px;top:707.5px;font-size:12px;color:#606266;font-weight:normal;">20条/页</div>
<svg style="position:absolute;left:1032px;top:716px" width="8" height="5" viewBox="0 0 8 5"><path d="M0.5 0.5L4 4L7.5 0.5" fill="none" stroke="#c0c4cc"/></svg>
<svg style="position:absolute;left:1067px;top:713px" width="7" height="10" viewBox="0 0 7 10"><path d="M5.5 1L1.5 5L5.5 9" fill="none" stroke="#c0c4cc" stroke-width="1.2"/></svg>
<div class="t" style="left:1100px;top:707.5px;font-size:12px;color:#409eff;font-weight:bold;">1</div>
<svg style="position:absolute;left:1132px;top:713px" width="7" height="10" viewBox="0 0 7 10"><path d="M1.5 1L5.5 5L1.5 9" fill="none" stroke="#c0c4cc" stroke-width="1.2"/></svg>
<div class="t" style="left:1167px;top:707.5px;font-size:12px;color:#606266;font-weight:normal;">前往</div>
<div style="position:absolute;left:1192px;top:706px;width:39px;height:24px;box-sizing:border-box;border:1px solid #dcdfe6;border-radius:3px;background:#fff"></div>
<div class="t" style="left:1011.5px;width:400px;text-align:center;top:707.5px;font-size:12px;color:#606266;font-weight:normal;">1</div>
<div class="t" style="left:1234px;top:707.5px;font-size:12px;color:#606266;font-weight:normal;">页</div>
<div style="position:absolute;left:566px;top:748px;width:69px;height:32px;background:#409eff"></div>
<div class="t" style="left:400.5px;width:400px;text-align:center;top:754px;font-size:12px;color:#fff;font-weight:bold;">确认</div>
<div style="position:absolute;left:646px;top:748px;width:69px;height:32px;box-sizing:border-box;border:1px solid #dcdfe6;background:#fff"></div>
<div class="t" style="left:480.5px;width:400px;text-align:center;top:754px;font-size:12px;color:#606266;font-weight:normal;">取消</div>
</body></html>
